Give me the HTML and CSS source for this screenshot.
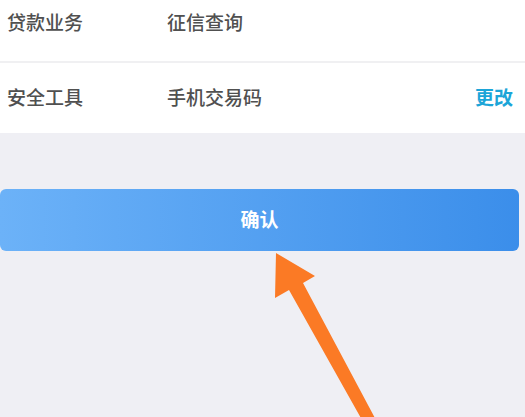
FILE: index.html
```html
<!DOCTYPE html>
<html lang="zh-CN">
<head>
    <meta charset="UTF-8">
    <meta name="viewport" content="width=device-width, initial-scale=1.0">
    <title>确认</title>
    <link rel="stylesheet" href="styles.css">
</head>
<body>

    <div class="panel">
        <div class="row first">
            <span class="label">贷款业务</span>
            <span class="value">征信查询</span>
        </div>
        <div class="row">
            <span class="label">安全工具</span>
            <span class="value">手机交易码</span>
            <a class="action">更改</a>
        </div>
    </div>

    <div class="actions">
        <button class="confirm">确认</button>
    </div>

    <!-- annotation arrow -->
    <svg class="arrow" width="525" height="417" viewBox="0 0 525 417">
        <polygon fill="#fb7a25" points="276,253 315,276 303,283 376,420 362,420 289,290 275,298"/>
    </svg>

</body>
</html>
```

FILE: styles.css
```css
body {
    margin: 0;
    background-color: #efeff4;
    font-family: "Noto Sans CJK SC", "Noto Sans", sans-serif;
    height: 417px;
    overflow: hidden;
    position: relative;
}
.panel {
    background-color: #fff;
}
.row {
    display: flex;
    align-items: center;
    height: 70px;
    padding: 0 12px 4px 7px;
    box-sizing: border-box;
    font-size: 19px;
    font-weight: 500;
    color: #505050;
}
.row.first {
    height: 63px;
    align-items: flex-start;
    padding-top: 8px;
    border-bottom: 2px solid #f0f0f2;
}
.label {
    width: 160px;
}
.value {
    flex: 1;
}
.action {
    color: #1ca5d8;
    font-weight: 700;
}
.actions {
    padding: 56px 6px 0 0;
}
.confirm {
    display: block;
    width: 100%;
    height: 62px;
    padding-bottom: 4px;
    border: none;
    border-radius: 6px;
    background: linear-gradient(90deg, #6cb2f8, #3b8eea);
    color: #fff;
    font-family: inherit;
    font-size: 19px;
    font-weight: bold;
}
.arrow {
    position: absolute;
    left: 0;
    top: 0;
}
```
